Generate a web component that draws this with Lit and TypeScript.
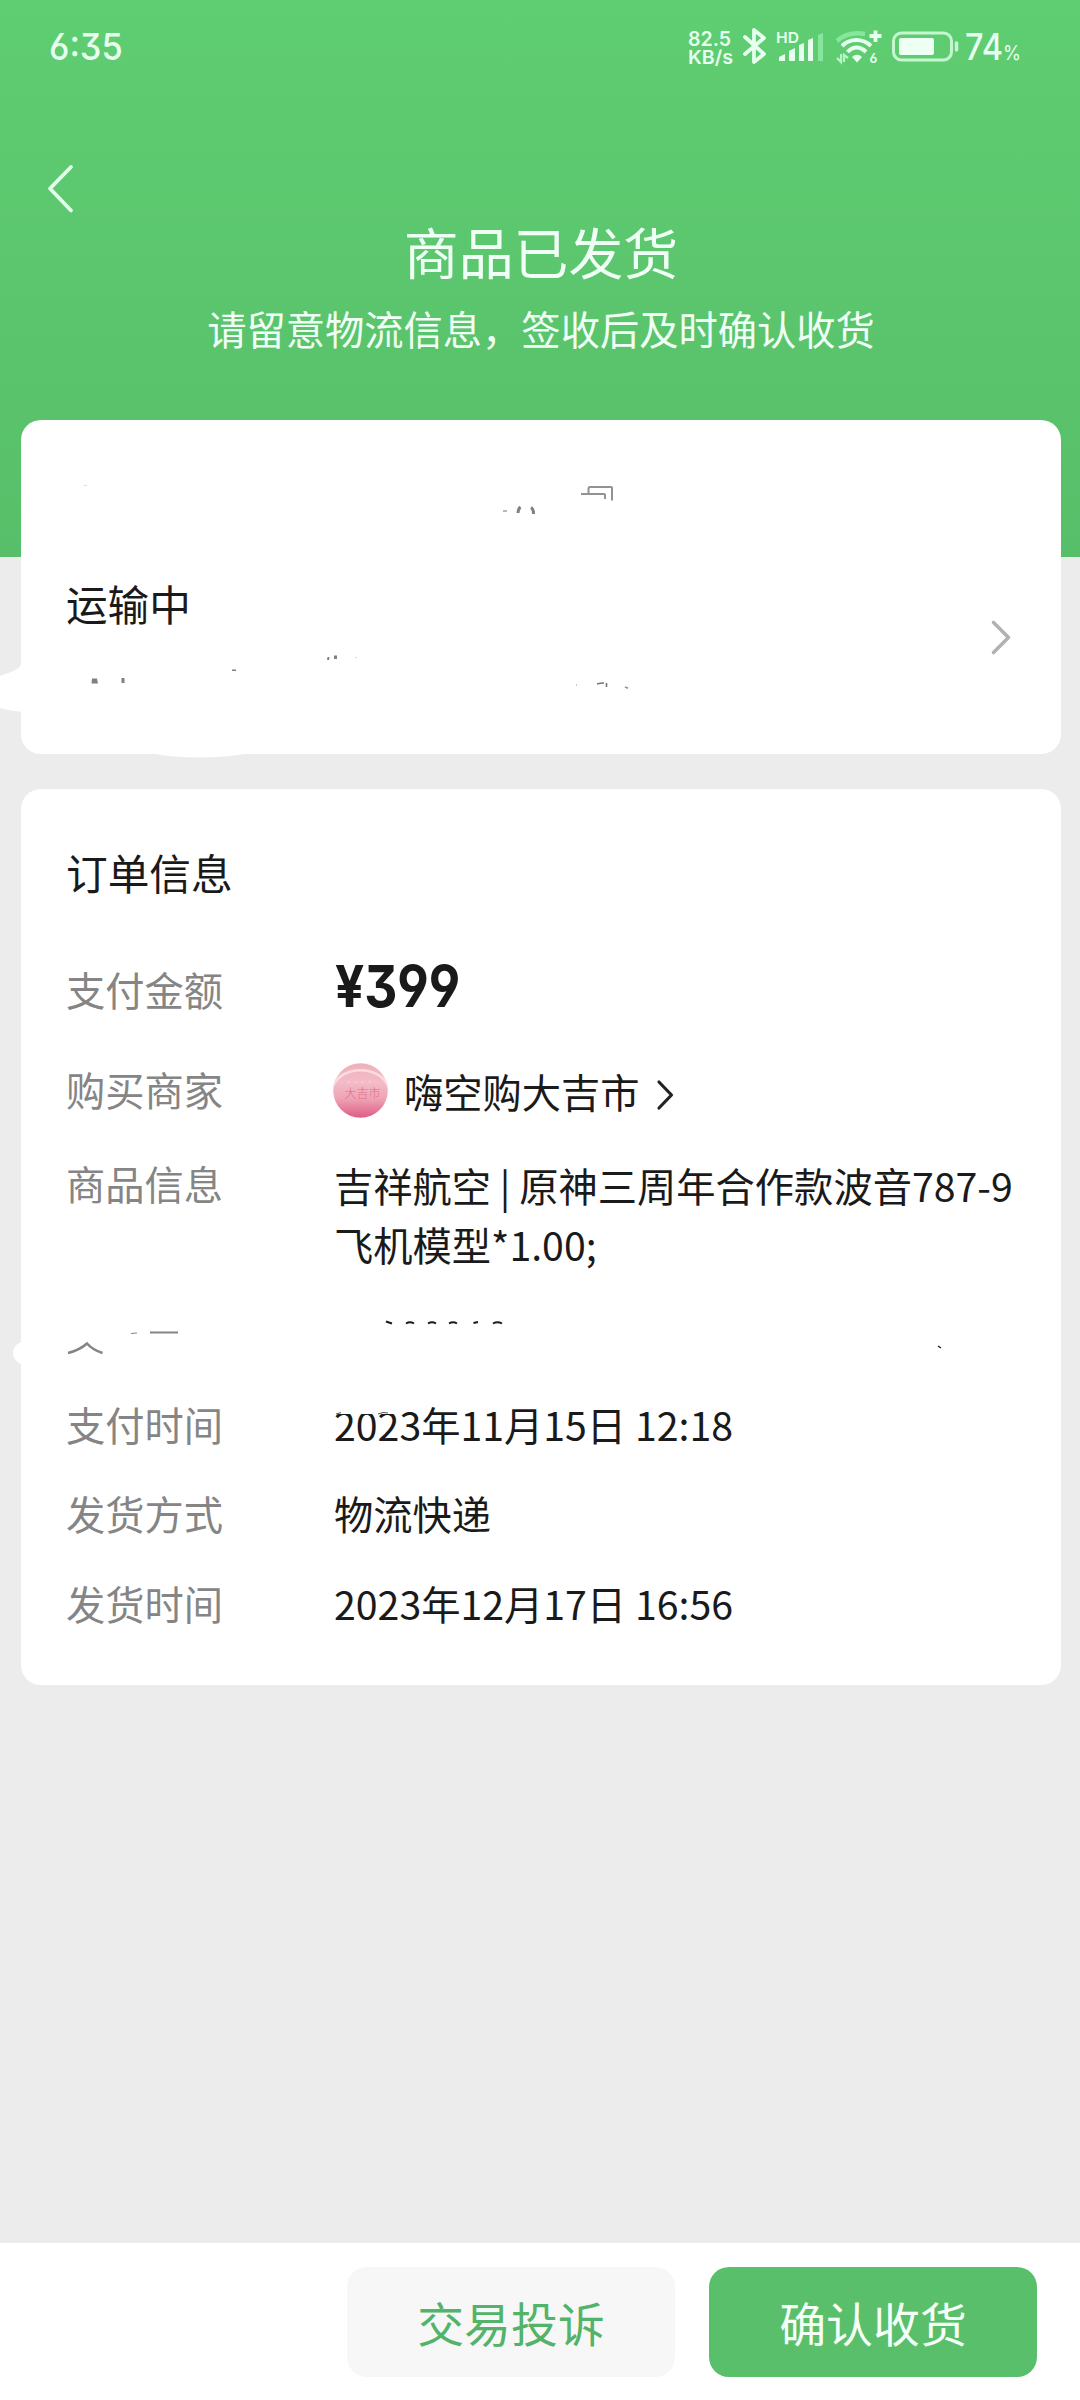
import { LitElement, html, css, svg } from "lit";
import { customElement } from "lit/decorators.js";

const cjk = css`"Noto Sans CJK SC", "Noto Sans", sans-serif`;

@customElement("status-bar")
class StatusBar extends LitElement {
  static styles = css`
    :host { display: flex; height: 94px; align-items: center; justify-content: space-between; box-sizing: border-box;
      padding: 0 58px 0 49px; color: #e6ffee; font-family: Inter, sans-serif; font-weight: 500;
      font-feature-settings: "cv03", "cv04", "cv09"; }
    .time { font-size: 37px; line-height: 94px; transform: scaleX(0.93); transform-origin: left center; }
    .icons { display: block; width: 335px; height: 94px; }
    .icons text { font-family: Inter, sans-serif; font-weight: 600; fill: #e6ffee; }
    .icons .level { font-weight: 500; }
    .icons .unit { font-weight: 400; }
  `;
  render() {
    return html`
      <div class="time">6:35</div>
      <svg class="icons" viewBox="687 0 335 94">
        <g fill="none" stroke="#e6ffee" stroke-width="3.8" stroke-linejoin="round" stroke-linecap="round">
          <path d="M745 37 L764 54 L754 62 V30 L764 38 L745 54" />
        </g>
        <text x="688" y="46" font-size="20" textLength="43" lengthAdjust="spacingAndGlyphs">82.5</text>
        <text x="688" y="64" font-size="19" textLength="45" lengthAdjust="spacingAndGlyphs">KB/s</text>
        <text x="776" y="43" font-size="15" textLength="23" lengthAdjust="spacingAndGlyphs">HD</text>
        <g fill="#e6ffee">
          <path d="M779 57 L785 54 V61 H779 Z" />
          <path d="M789 51 L795 48 V61 H789 Z" />
          <path d="M799 45 L804 43 V61 H799 Z" />
          <path d="M808 40 L813 38 V61 H808 Z" />
          <path d="M818 35 L823 33 V61 H818 Z" fill="#86e79c" />
        </g>
        <path d="M837 41 C845 34 854 32 865 34" fill="none" stroke="#86e79c" stroke-width="4.5" />
        <g fill="none" stroke="#e6ffee" stroke-width="4">
          <path d="M842 46 C850 38 863 38 871 46" />
          <path d="M847.500 52 C853 46 860 46 866 52" />
        </g>
        <path d="M852 57 C855 54 859 54 862 57 L857 62.500 Z" fill="#e6ffee" />
        <path d="M875.500 30.500 V42 M869.500 36 H881.500" stroke="#e6ffee" stroke-width="3.800" />
        <path d="M837 58 L841 62 V54 M844 62 V55 L848 58" fill="none" stroke="#b8f5c8" stroke-width="2.200" />
        <text x="869.500" y="62.500" font-size="13">6</text>
        <rect x="893.500" y="33" width="58" height="27" rx="8" fill="none" stroke="#c4f7d0" stroke-width="3" />
        <rect x="899" y="38" width="35" height="17" rx="2" fill="#eefff3" />
        <path d="M956.500 43 V50" stroke="#c4f7d0" stroke-width="3.500" stroke-linecap="round" />
        <text class="level" x="965" y="60" font-size="37" textLength="38" lengthAdjust="spacingAndGlyphs">74</text>
        <text class="unit" x="1003" y="60" font-size="20" textLength="18" lengthAdjust="spacingAndGlyphs">%</text>
      </svg>`;
  }
}

@customElement("shop-avatar")
class ShopAvatar extends LitElement {
  static styles = css`
    :host { display: block; width: 55px; height: 55px; }
    svg { display: block; }
    text { font-family: "Noto Sans CJK SC", sans-serif; font-weight: 300; }
  `;
  render() {
    return html`<svg width="55" height="55" viewBox="0 0 55 55">
      <defs>
        <linearGradient id="g" x1="0" y1="0" x2="0" y2="1">
          <stop offset="0" stop-color="#efb0bb" />
          <stop offset="0.35" stop-color="#f3bcc8" />
          <stop offset="0.65" stop-color="#efa3b5" />
          <stop offset="1" stop-color="#de5b85" />
        </linearGradient>
        <clipPath id="c"><circle cx="27.500" cy="27.500" r="27.300" /></clipPath>
      </defs>
      <g clip-path="url(#c)">
        <rect width="55" height="55" fill="url(#g)" />
        <path d="M0 23 C9 2 46 2 55 23" fill="none" stroke="#fadcdc" stroke-width="2.500" />
        <path d="M14 19 H42" stroke="#f6cdd5" stroke-width="1.500" stroke-dasharray="3 4" />
      </g>
      <text x="11.500" y="34.500" font-size="12" fill="#dc7085">大吉市</text>
    </svg>`;
  }
}

const shippingMarks = svg`
  <g fill="#fff">
    <path d="M0 676 C8 673 20 670 21 664 H30 V712 C18 712 8 710 0 708 Z" />
    <path d="M150 753 C180 759 218 759 250 753 Z" />
  </g>
  <g fill="none" stroke="#929292" stroke-width="2">
    <path d="M581 494 H604 Q605 494 605 495 V499" />
    <path d="M588.500 494 V489 Q588.500 487 590 487 H611 Q612 487 612 488 V500.500" />
    <path d="M503 511 H507" stroke-width="1.300" />
    <path d="M520.500 507 Q518 509 518 513 M531 507.500 Q533.500 509 533.500 514" stroke-width="3" stroke="#808080" />
    <path d="M597 684 Q600 683 604 683 M606.500 683 V687" stroke="#777" stroke-width="1.600" />
    <path d="M625 687 L628 688.300" stroke-width="1.500" />
  </g>
  <g fill="#808080">
    <path d="M92 678.500 H97 L98 683.500 H91.500 Z" />
    <rect x="121.500" y="678" width="3" height="5" />
    <rect x="232" y="669.500" width="4" height="1.500" />
    <path d="M327.500 657 H329.500 L329 660 H327 Z" />
    <rect x="334" y="655.500" width="3" height="3.500" />
    <rect x="355" y="657" width="2" height="1" fill="#ddd" />
    <rect x="84" y="485" width="3" height="1" fill="#ddd" />
    <rect x="576" y="684" width="1" height="2" fill="#ccc" />
  </g>`;

const orderMarks = svg`
  <circle cx="24" cy="1353" r="11" fill="#fff" />
  <rect x="333" y="1403" width="64" height="11" fill="#fff" />
  <g fill="none" stroke="#858585" stroke-width="2">
    <path d="M68 1353 C76 1351 82 1348 87 1343.500 C91 1348 96 1351 102.500 1353" stroke-width="2.600" />
    <path d="M150 1332.500 H178" />
    <path d="M131 1333.500 L137 1333" stroke-width="1.200" />
  </g>
  <g fill="none" stroke="#1a1a1a" stroke-width="2">
    <path d="M386 1321.500 L392 1323.500 M406 1323.500 Q410 1321 414 1323.500 M428 1323.500 Q432 1321 436 1323.500 M449 1323.500 Q453 1321 457 1323.500 M473.500 1323 L478 1322 M493 1323.500 Q497.500 1321 502 1323.500" />
    <path d="M938 1346 L941 1348" stroke-width="1.300" />
    <path d="M336 1414 L341 1412.600 M378 1414 Q383 1411.500 388 1413" stroke-width="1" stroke="#555" />
  </g>`;

@customElement("app-root")
class AppRoot extends LitElement {
  static styles = css`
    :host { display: block; width: 1080px; height: 2400px; overflow: hidden; background: #ececec; color: #1a1a1a;
      font-family: ${cjk}; font-size: 39.270px; line-height: 59px; }
    .page { display: flex; flex-direction: column; height: 2400px; position: relative; }
    .header { height: 557px; flex: none; background: linear-gradient(#5fcd72, #57bf69); color: #f0fff5; }
    .nav { height: 113px; display: flex; align-items: flex-start; box-sizing: border-box; padding: 68px 0 0 40px; }
    .nav svg { display: block; }
    .title { font-size: 54.900px; line-height: 76px; text-align: center; margin-top: 5px; padding-left: 2px; }
    .sub { text-align: center; margin-top: 10px; padding-left: 2px; }
    .card { background: #fff; border-radius: 20px; margin: 0 19px 0 21px; box-sizing: border-box; flex: none; }
    .ship { height: 334px; margin-top: -137px; display: flex; justify-content: space-between; padding: 154px 49px 0 45px; font-size: 41.600px; }
    .ship svg { display: block; margin-top: 43px; }
    .order { height: 896px; margin-top: 35px; padding: 54px 0 0 45px; }
    h2 { margin: 0 0 57px; font-size: 41.700px; line-height: 59px; font-weight: 400; }
    .row { display: grid; grid-template-columns: 268px 1fr; }
    .label { color: #858585; }
    .pay { height: 100px; }
    .shop { height: 94px; }
    .goods { height: 241px; }
    .line { height: 89.300px; }
    .price { font-family: Inter, sans-serif; font-weight: 700; font-size: 58px; transform: scaleX(0.885); transform-origin: left center;
      font-feature-settings: "cv03", "cv04", "cv09"; line-height: 55px; height: 59px; padding-left: 1px; }
    .merchant { display: flex; align-items: center; height: 63px; margin-left: -1px; }
    .merchant .name { margin: 0 15px 0 16px; }
    .merchant svg { margin-top: 8px; display: block; }
    .goods .value { padding-top: 2px; white-space: nowrap; }
    .spacer { flex: 1; }
    .bar { height: 157px; flex: none; background: #fff; display: flex; justify-content: flex-end; gap: 34px; padding: 24px 43px 0 0; box-sizing: border-box; }
    .btn { width: 328px; height: 110px; border-radius: 20px; border: 0; padding: 0; font: 46.900px/110px ${cjk}; }
    .plain { background: #f7f7f7; color: #52b369; }
    .main { background: #5abf6a; color: #f4fff7; }
    .marks { position: absolute; left: 0; top: 0; pointer-events: none; }
  `;
  render() {
    return html`<div class="page">
      <div class="header">
        <status-bar></status-bar>
        <div class="nav">
          <svg width="40" height="54" viewBox="40 162 40 54"><path d="M71 167 L50 188.500 L71 210.500" fill="none" stroke="#e6ffee" stroke-width="3.800" stroke-linecap="round" stroke-linejoin="round" /></svg>
        </div>
        <div class="title">商品已发货</div>
        <div class="sub">请留意物流信息，签收后及时确认收货</div>
      </div>
      <div class="card ship">
        <div>运输中</div>
        <svg width="22" height="40" viewBox="990 617 22 40"><path d="M993.500 622.500 L1008.500 637.500 L993.500 652.500" fill="none" stroke="#b2b2b2" stroke-width="3.600" stroke-linecap="round" stroke-linejoin="round" /></svg>
      </div>
      <div class="card order">
        <h2>订单信息</h2>
        <div class="row pay"><div class="label">支付金额</div><div class="price">¥399</div></div>
        <div class="row shop"><div class="label">购买商家</div>
          <div class="merchant"><shop-avatar></shop-avatar><span class="name">嗨空购大吉市</span>
            <svg width="20" height="32" viewBox="0 0 20 32"><path d="M4 3 L16.500 16 L4 29" fill="none" stroke="#222" stroke-width="3.200" stroke-linecap="round" stroke-linejoin="round" /></svg>
          </div></div>
        <div class="row goods"><div class="label">商品信息</div><div class="value">吉祥航空 | 原神三周年合作款波音787-9<br />飞机模型*1.00;</div></div>
        <div class="row line"><div class="label">支付时间</div><div>2023年11月15日 12:18</div></div>
        <div class="row line"><div class="label">发货方式</div><div>物流快递</div></div>
        <div class="row line"><div class="label">发货时间</div><div>2023年12月17日 16:56</div></div>
      </div>
      <div class="spacer"></div>
      <div class="bar"><button class="btn plain">交易投诉</button><button class="btn main">确认收货</button></div>
      <svg class="marks" width="1080" height="2400" viewBox="0 0 1080 2400">${shippingMarks}${orderMarks}</svg>
    </div>`;
  }
}
